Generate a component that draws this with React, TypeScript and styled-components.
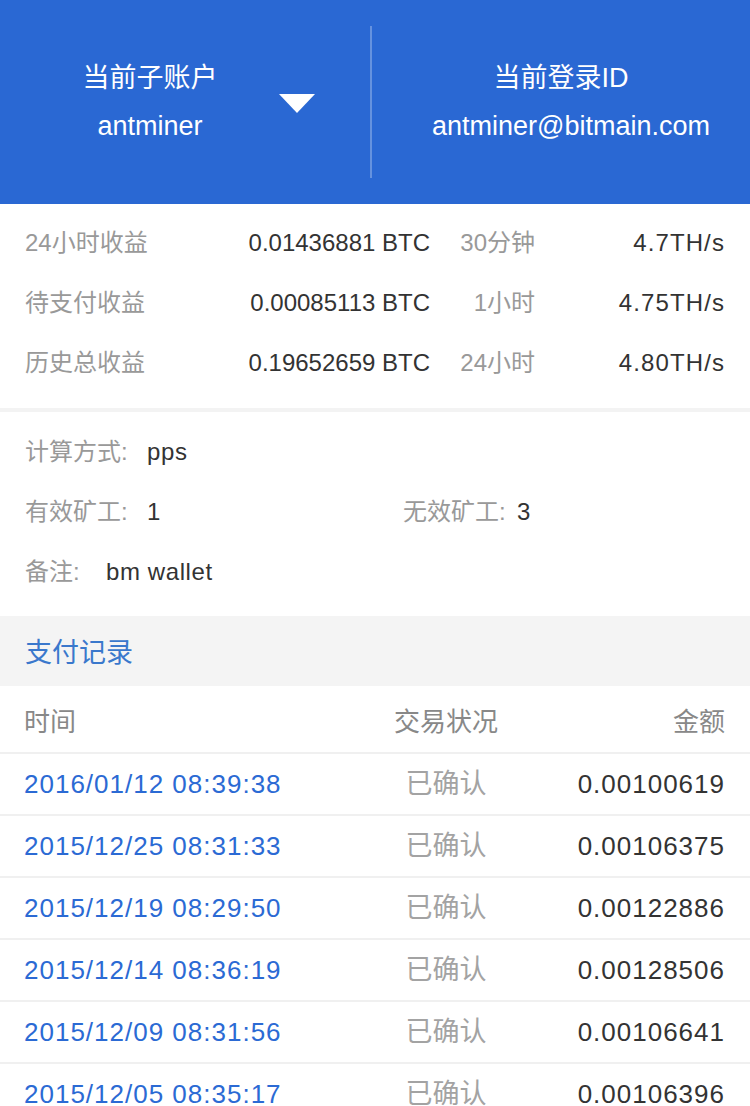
import React from "react";
import styled, { createGlobalStyle } from "styled-components";

const Global = createGlobalStyle`
  html, body { margin: 0; padding: 0; background: #ffffff; }
  body { font-family: "Liberation Sans", "Noto Sans CJK SC", sans-serif; -webkit-font-smoothing: antialiased; }
  * { box-sizing: border-box; }
`;

const Page = styled.div`
  width: 750px;
  background: #ffffff;
`;

const Header = styled.header`
  height: 204px;
  background: #2a68d3;
  display: flex;
  align-items: center;
  color: #ffffff;
`;

const LeftPane = styled.div`
  width: 370px;
  display: flex;
  align-items: center;
`;

const TextBlock = styled.div<{ $width: number; $padLeft?: number }>`
  width: ${(p) => p.$width}px;
  padding-left: ${(p) => p.$padLeft ?? 0}px;
  display: flex;
  flex-direction: column;
  align-items: center;
  gap: 10px;
`;

const HeadLabel = styled.div`
  font-size: 27px;
  line-height: 38px;
  white-space: nowrap;
`;

const HeadValue = styled.div<{ $shift?: number }>`
  font-size: 27px;
  line-height: 38px;
  white-space: nowrap;
  padding-left: ${(p) => p.$shift ?? 0}px;
`;

const Arrow = styled.div`
  width: 0;
  height: 0;
  border-left: 18px solid transparent;
  border-right: 18px solid transparent;
  border-top: 19px solid #ffffff;
  margin-top: 2px;
`;

const Divider = styled.div`
  width: 2px;
  height: 152px;
  background: rgba(255, 255, 255, 0.28);
`;

const StatsGrid = styled.section`
  padding: 9px 25px 15px;
  display: grid;
  grid-template-columns: 130px 275px 105px 190px;
  grid-auto-rows: 60px;
  align-items: center;
`;

const StatLabel = styled.div<{ $right?: boolean }>`
  font-size: 24px;
  line-height: 32px;
  color: #999999;
  text-align: ${(p) => (p.$right ? "right" : "left")};
  white-space: nowrap;
`;

const StatValue = styled.div<{ $track?: number }>`
  font-size: 24px;
  line-height: 32px;
  color: #333333;
  text-align: right;
  letter-spacing: ${(p) => p.$track ?? 0}px;
  white-space: nowrap;
`;

const Band = styled.div<{ $h: number }>`
  height: ${(p) => p.$h}px;
  background: #f3f3f3;
`;

const InfoGrid = styled.section`
  padding: 10px 25px 14px;
  display: grid;
  grid-template-columns: 378px 1fr;
  grid-auto-rows: 60px;
  align-items: center;
`;

const Field = styled.div`
  display: flex;
  align-items: baseline;
  white-space: nowrap;
  line-height: 32px;
`;

const FieldLabel = styled.span<{ $w: number }>`
  width: ${(p) => p.$w}px;
  font-size: 24px;
  color: #999999;
`;

const FieldValue = styled.span`
  font-size: 24px;
  color: #333333;
  letter-spacing: 0.6px;
`;

const SectionTitle = styled.div`
  height: 70px;
  background: #f4f4f4;
  padding: 4px 25px 0;
  display: flex;
  align-items: center;
  font-size: 27px;
  line-height: 36px;
  color: #3a78cc;
`;

const TableRow = styled.div<{ $h: number; $top?: number }>`
  height: ${(p) => p.$h}px;
  padding: ${(p) => p.$top ?? 0}px 25px 0 24px;
  display: grid;
  grid-template-columns: 331px 182px 188px;
  align-items: center;
  border-bottom: 2px solid #f0f0f0;
`;

const HeadCell = styled.div<{ $align: "left" | "center" | "right" }>`
  font-size: 26px;
  line-height: 34px;
  color: #888888;
  text-align: ${(p) => p.$align};
  white-space: nowrap;
`;

const DateCell = styled.div`
  font-size: 26px;
  line-height: 34px;
  color: #2b6ad4;
  letter-spacing: 1px;
  white-space: nowrap;
`;

const StatusCell = styled.div`
  font-size: 27px;
  line-height: 34px;
  color: #a3a3a3;
  text-align: center;
  white-space: nowrap;
`;

const AmountCell = styled.div`
  font-size: 26px;
  line-height: 34px;
  color: #333333;
  letter-spacing: 1px;
  text-align: right;
  white-space: nowrap;
`;

const stats = [
  ["24小时收益", "0.01436881 BTC", "30分钟", "4.7TH/s"],
  ["待支付收益", "0.00085113 BTC", "1小时", "4.75TH/s"],
  ["历史总收益", "0.19652659 BTC", "24小时", "4.80TH/s"],
];

const records = [
  ["2016/01/12 08:39:38", "0.00100619"],
  ["2015/12/25 08:31:33", "0.00106375"],
  ["2015/12/19 08:29:50", "0.00122886"],
  ["2015/12/14 08:36:19", "0.00128506"],
  ["2015/12/09 08:31:56", "0.00106641"],
  ["2015/12/05 08:35:17", "0.00106396"],
  ["2015/11/30 08:33:02", "0.00107215"],
];

export default function App() {
  return (
    <Page>
      <Global />
      <Header>
        <LeftPane>
          <TextBlock $width={279} $padLeft={21}>
            <HeadLabel>当前子账户</HeadLabel>
            <HeadValue>antminer</HeadValue>
          </TextBlock>
          <Arrow />
        </LeftPane>
        <Divider />
        <TextBlock $width={378}>
          <HeadLabel>当前登录ID</HeadLabel>
          <HeadValue $shift={20}>antminer@bitmain.com</HeadValue>
        </TextBlock>
      </Header>

      <StatsGrid>
        {stats.map((r) => (
          <React.Fragment key={r[0]}>
            <StatLabel>{r[0]}</StatLabel>
            <StatValue>{r[1]}</StatValue>
            <StatLabel $right>{r[2]}</StatLabel>
            <StatValue $track={1.1}>{r[3]}</StatValue>
          </React.Fragment>
        ))}
      </StatsGrid>

      <Band $h={4} />

      <InfoGrid>
        <Field>
          <FieldLabel $w={122}>计算方式:</FieldLabel>
          <FieldValue>pps</FieldValue>
        </Field>
        <div />
        <Field>
          <FieldLabel $w={122}>有效矿工:</FieldLabel>
          <FieldValue>1</FieldValue>
        </Field>
        <Field>
          <FieldLabel $w={114}>无效矿工:</FieldLabel>
          <FieldValue>3</FieldValue>
        </Field>
        <Field>
          <FieldLabel $w={81}>备注:</FieldLabel>
          <FieldValue>bm wallet</FieldValue>
        </Field>
      </InfoGrid>

      <SectionTitle>支付记录</SectionTitle>

      <TableRow $h={68} $top={6}>
        <HeadCell $align="left">时间</HeadCell>
        <HeadCell $align="center">交易状况</HeadCell>
        <HeadCell $align="right">金额</HeadCell>
      </TableRow>

      {records.map(([d, a]) => (
        <TableRow $h={62} key={d}>
          <DateCell>{d}</DateCell>
          <StatusCell>已确认</StatusCell>
          <AmountCell>{a}</AmountCell>
        </TableRow>
      ))}
    </Page>
  );
}
